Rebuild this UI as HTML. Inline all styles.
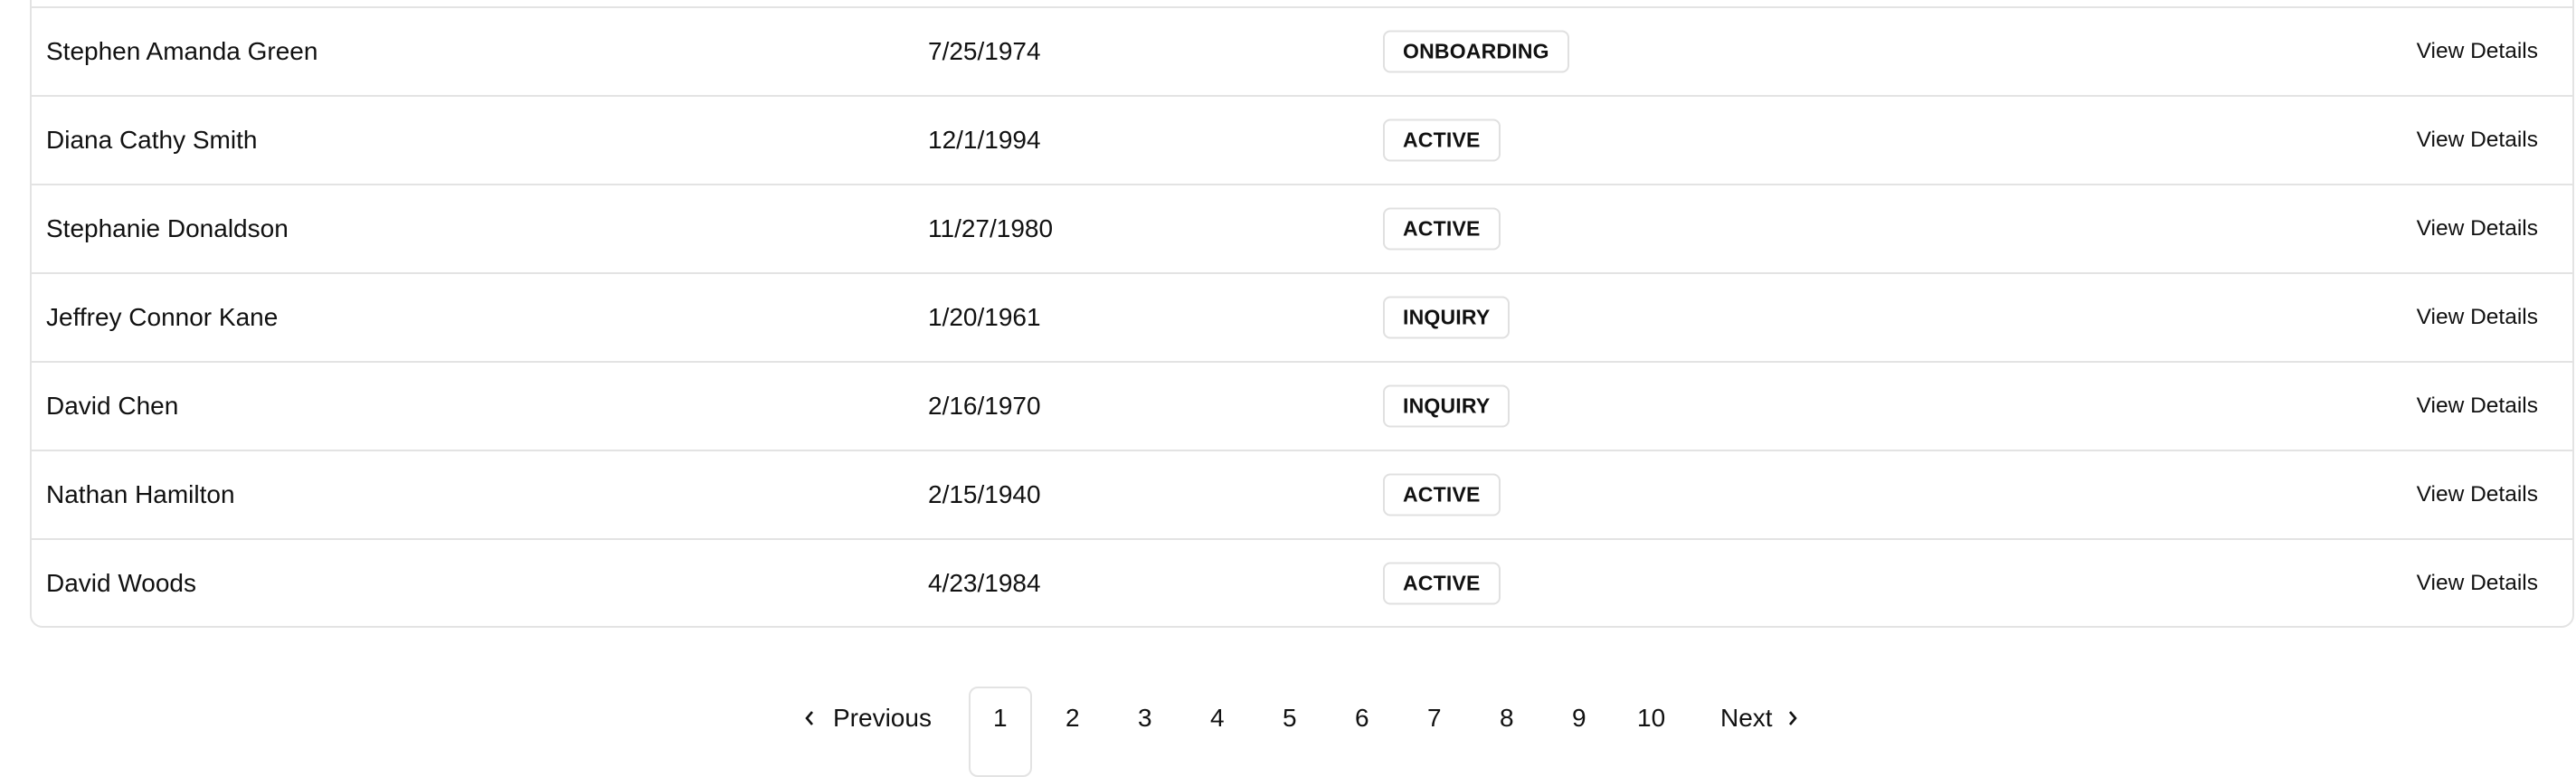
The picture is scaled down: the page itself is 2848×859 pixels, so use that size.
<!DOCTYPE html>
<html><head><meta charset="utf-8"><style>
body{margin:0;width:2848px;height:822px;background:#fff;font-family:"Liberation Sans",sans-serif;color:#111;position:relative;overflow:hidden}
.tbl{position:absolute;left:33px;top:-20px;width:2813px;height:714px;border:2px solid #e3e3e3;border-radius:0 0 14px 14px;box-sizing:border-box}
.row{position:absolute;left:0;right:0;height:98px;border-top:2px solid #e3e3e3;box-sizing:border-box}
.row span{position:absolute;top:50%;transform:translateY(-50%);white-space:nowrap}
.n{left:16px;font-size:28px}
.d{left:991px;font-size:28px}
.b{left:1494px;font-size:23px;font-weight:bold;border:2px solid #e0e0e0;border-radius:8px;padding:8px 20px;letter-spacing:.2px}
.v{right:38px;font-size:24.5px}
.pg{position:absolute;top:794px;transform:translateY(-50%);font-size:28px;white-space:nowrap}
.box{position:absolute;left:1071px;top:759px;width:70px;height:100px;border:2px solid #e3e3e3;border-radius:10px;box-sizing:border-box}
</style></head><body>
<div class="tbl">
<div class="row" style="top:25px"><span class="n">Stephen Amanda Green</span><span class="d">7/25/1974</span><span class="b">ONBOARDING</span><span class="v">View Details</span></div>
<div class="row" style="top:123px"><span class="n">Diana Cathy Smith</span><span class="d">12/1/1994</span><span class="b">ACTIVE</span><span class="v">View Details</span></div>
<div class="row" style="top:221px"><span class="n">Stephanie Donaldson</span><span class="d">11/27/1980</span><span class="b">ACTIVE</span><span class="v">View Details</span></div>
<div class="row" style="top:319px"><span class="n">Jeffrey Connor Kane</span><span class="d">1/20/1961</span><span class="b">INQUIRY</span><span class="v">View Details</span></div>
<div class="row" style="top:417px"><span class="n">David Chen</span><span class="d">2/16/1970</span><span class="b">INQUIRY</span><span class="v">View Details</span></div>
<div class="row" style="top:515px"><span class="n">Nathan Hamilton</span><span class="d">2/15/1940</span><span class="b">ACTIVE</span><span class="v">View Details</span></div>
<div class="row" style="top:613px"><span class="n">David Woods</span><span class="d">4/23/1984</span><span class="b">ACTIVE</span><span class="v">View Details</span></div>
</div>
<div class="box"></div>
<svg style="position:absolute;left:887px;top:783px" width="16" height="22" viewBox="0 0 16 22"><path d="M11 4 L5 11 L11 18" fill="none" stroke="#111" stroke-width="2.6"/></svg>
<span class="pg" style="left:921px">Previous</span>
<span class="pg" style="left:1098px">1</span>
<span class="pg" style="left:1178px">2</span>
<span class="pg" style="left:1258px">3</span>
<span class="pg" style="left:1338px">4</span>
<span class="pg" style="left:1418px">5</span>
<span class="pg" style="left:1498px">6</span>
<span class="pg" style="left:1578px">7</span>
<span class="pg" style="left:1658px">8</span>
<span class="pg" style="left:1738px">9</span>
<span class="pg" style="left:1810px">10</span>
<span class="pg" style="left:1902px">Next</span>
<svg style="position:absolute;left:1974px;top:783px" width="16" height="22" viewBox="0 0 16 22"><path d="M5 4 L11 11 L5 18" fill="none" stroke="#111" stroke-width="2.6"/></svg>
</body></html>
